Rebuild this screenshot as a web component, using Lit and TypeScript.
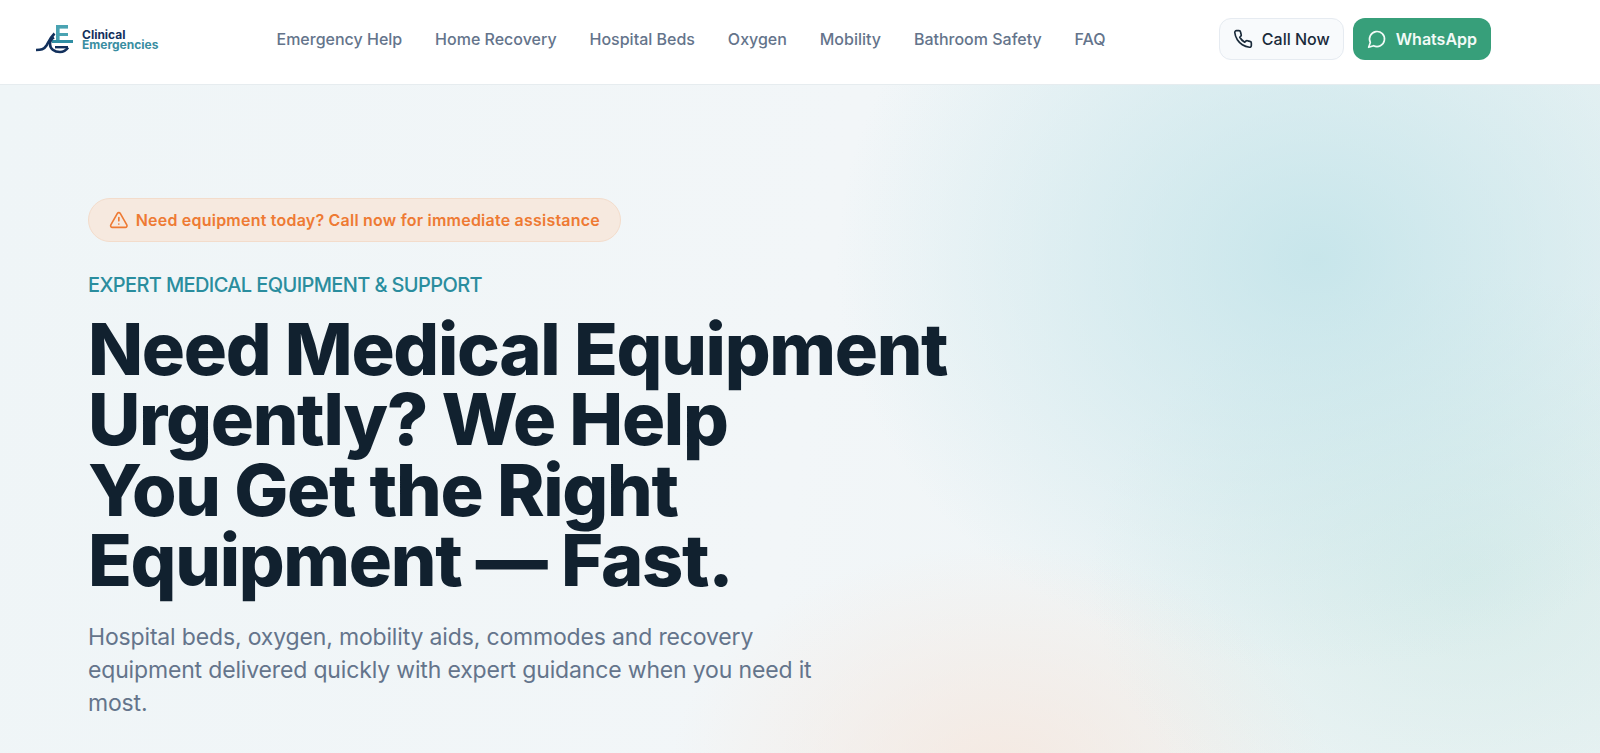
import { css, html, LitElement, svg } from 'lit';
import { customElement } from 'lit/decorators.js';

const NAV = ['Emergency Help', 'Home Recovery', 'Hospital Beds', 'Oxygen', 'Mobility', 'Bathroom Safety', 'FAQ'];

const logoMark = svg`
  <rect x="21" y="1" width="12" height="3.6" fill="#4aa3b2"/>
  <rect x="21" y="1" width="3.6" height="18" fill="#4aa3b2"/>
  <rect x="21" y="9" width="12" height="3" fill="#4aa3b2"/>
  <rect x="17" y="16" width="21" height="3" fill="#2f8ea3"/>
  <path d="M1 26c5 0 8-.5 10.500-4.500 2-3.500 4-8 8-12" fill="none" stroke="#12305c" stroke-width="2.600"/>
  <path d="M33 23.500c-2 3-5 4.500-8 4.500-6 0-10-3.500-10-8 0-3 1.500-5 4-6.500" fill="none" stroke="#12305c" stroke-width="2.600"/>
  <rect x="20" y="22" width="13" height="2.400" fill="#12305c"/>`;

@customElement('app-root')
export class AppRoot extends LitElement {
  render() {
    return html`
      <header class="topbar">
        <a class="logo">
          <svg width="40" height="30" viewBox="0 0 40 30">${logoMark}</svg>
          <span class="logo-text">
            <span class="logo-a">Clinical</span>
            <span class="logo-b">Emergencies</span>
          </span>
        </a>
        <nav class="nav">
          ${NAV.map((item) => html`<a>${item}</a>`)}
        </nav>
        <div class="actions">
          <a class="btn call">
            <svg width="20" height="20" viewBox="0 0 24 24" fill="none" stroke="currentColor" stroke-width="2" stroke-linecap="round" stroke-linejoin="round">
              <path d="M22 16.920v3a2 2 0 0 1-2.180 2 19.790 19.790 0 0 1-8.630-3.070 19.500 19.500 0 0 1-6-6 19.790 19.790 0 0 1-3.070-8.670A2 2 0 0 1 4.110 2h3a2 2 0 0 1 2 1.720 12.840 12.840 0 0 0 .7 2.810 2 2 0 0 1-.45 2.110L8.090 9.910a16 16 0 0 0 6 6l1.270-1.270a2 2 0 0 1 2.110-.45 12.840 12.840 0 0 0 2.810.7A2 2 0 0 1 22 16.920z"/>
            </svg>
            Call Now
          </a>
          <a class="btn wa">
            <svg width="20" height="20" viewBox="0 0 24 24" fill="none" stroke="currentColor" stroke-width="2" stroke-linecap="round" stroke-linejoin="round">
              <path d="M7.900 20A9 9 0 1 0 4 16.100L2 22z"/>
            </svg>
            WhatsApp
          </a>
        </div>
      </header>
      <section class="hero">
        <div class="badge">
          <svg width="20" height="20" viewBox="0 0 24 24" fill="none" stroke="currentColor" stroke-width="2" stroke-linecap="round" stroke-linejoin="round">
            <path d="m21.730 18-8-14a2 2 0 0 0-3.480 0l-8 14A2 2 0 0 0 4 21h16a2 2 0 0 0 1.730-3"/>
            <path d="M12 9v4"/>
            <path d="M12 17h.01"/>
          </svg>
          Need equipment today? Call now for immediate assistance
        </div>
        <p class="eyebrow">EXPERT MEDICAL EQUIPMENT &amp; SUPPORT</p>
        <h1>Need Medical Equipment<br />Urgently? We Help<br />You Get the Right<br />Equipment — Fast.</h1>
        <p class="lede">Hospital beds, oxygen, mobility aids, commodes and recovery equipment delivered quickly with expert guidance when you need it most.</p>
      </section>
    `;
  }

  static styles = css`
    :host {
      display: block;
      height: 753px;
      overflow: hidden;
      font-family: Inter, 'Noto Sans', sans-serif;
      background: #fff;
    }

    .topbar {
      height: 85px;
      box-sizing: border-box;
      display: flex;
      align-items: center;
      background: #fff;
      border-bottom: 1px solid #e6ecef;
      padding: 0 109px 7px 35px;
    }

    .logo {
      width: 241px;
      height: 60px;
      display: flex;
      align-items: center;
      gap: 7px;
      flex: none;
    }

    .logo-text {
      display: flex;
      flex-direction: column;
      line-height: 10px;
      font-weight: 700;
      padding-top: 3px;
    }

    .logo-a {
      font-size: 12px;
      color: #14305c;
    }

    .logo-b {
      font-size: 12px;
      color: #3a8ea2;
    }

    .nav {
      display: flex;
      gap: 32.900px;
      flex: 1;
      font-size: 16px;
      color: #64748b;
      font-weight: 450;
      padding-left: 0.5px;
    }

    .actions {
      display: flex;
      gap: 9px;
    }

    .btn {
      height: 42px;
      box-sizing: border-box;
      display: flex;
      align-items: center;
      gap: 9px;
      border-radius: 12px;
      font-size: 16px;
      font-weight: 500;
      padding: 0 14px;
    }

    .call {
      background: #f8fafc;
      border: 1px solid #e6ebf1;
      color: #1a2a3a;
      padding: 0 13px;
    }

    .wa {
      background: #379f7a;
      color: #f2faf7;
      font-weight: 600;
    }

    .hero {
      height: 700px;
      box-sizing: border-box;
      padding: 113px 88px 0;
      background:
        radial-gradient(ellipse 480px 410px at 1316px 175px, rgba(190, 226, 232, 0.8), transparent),
        radial-gradient(ellipse 380px 300px at 1470px 490px, rgba(200, 230, 226, 0.55), transparent),
        radial-gradient(ellipse 330px 230px at 1000px 690px, rgba(246, 230, 220, 0.8), transparent),
        linear-gradient(100deg, #eff5f7 0%, #f2f6f8 50%, #ebf3f4 100%);
    }

    .badge {
      width: 533px;
      height: 44px;
      box-sizing: border-box;
      display: flex;
      align-items: center;
      gap: 7px;
      padding: 0 20px;
      border-radius: 22px;
      background: #f6e9df;
      border: 1px solid #f3dccb;
      color: #ee7a33;
      font-size: 16px;
      letter-spacing: 0.22px;
      font-weight: 600;
      white-space: nowrap;
    }

    .eyebrow {
      margin: 29px 0 0;
      font-size: 20px;
      letter-spacing: -0.62px;
      line-height: 28px;
      color: #2a8d9e;
      font-weight: 500;
    }

    h1 {
      margin: 15px 0 0;
      font-size: 72px;
      line-height: 70.400px;
      font-weight: 760;
      letter-spacing: -1.3px;
      color: #11212f;
    }

    .lede {
      margin: 25px 0 0;
      width: 740px;
      font-size: 23px;
      letter-spacing: -0.16px;
      line-height: 33px;
      color: #64748b;
      font-weight: 400;
    }
  `;
}
